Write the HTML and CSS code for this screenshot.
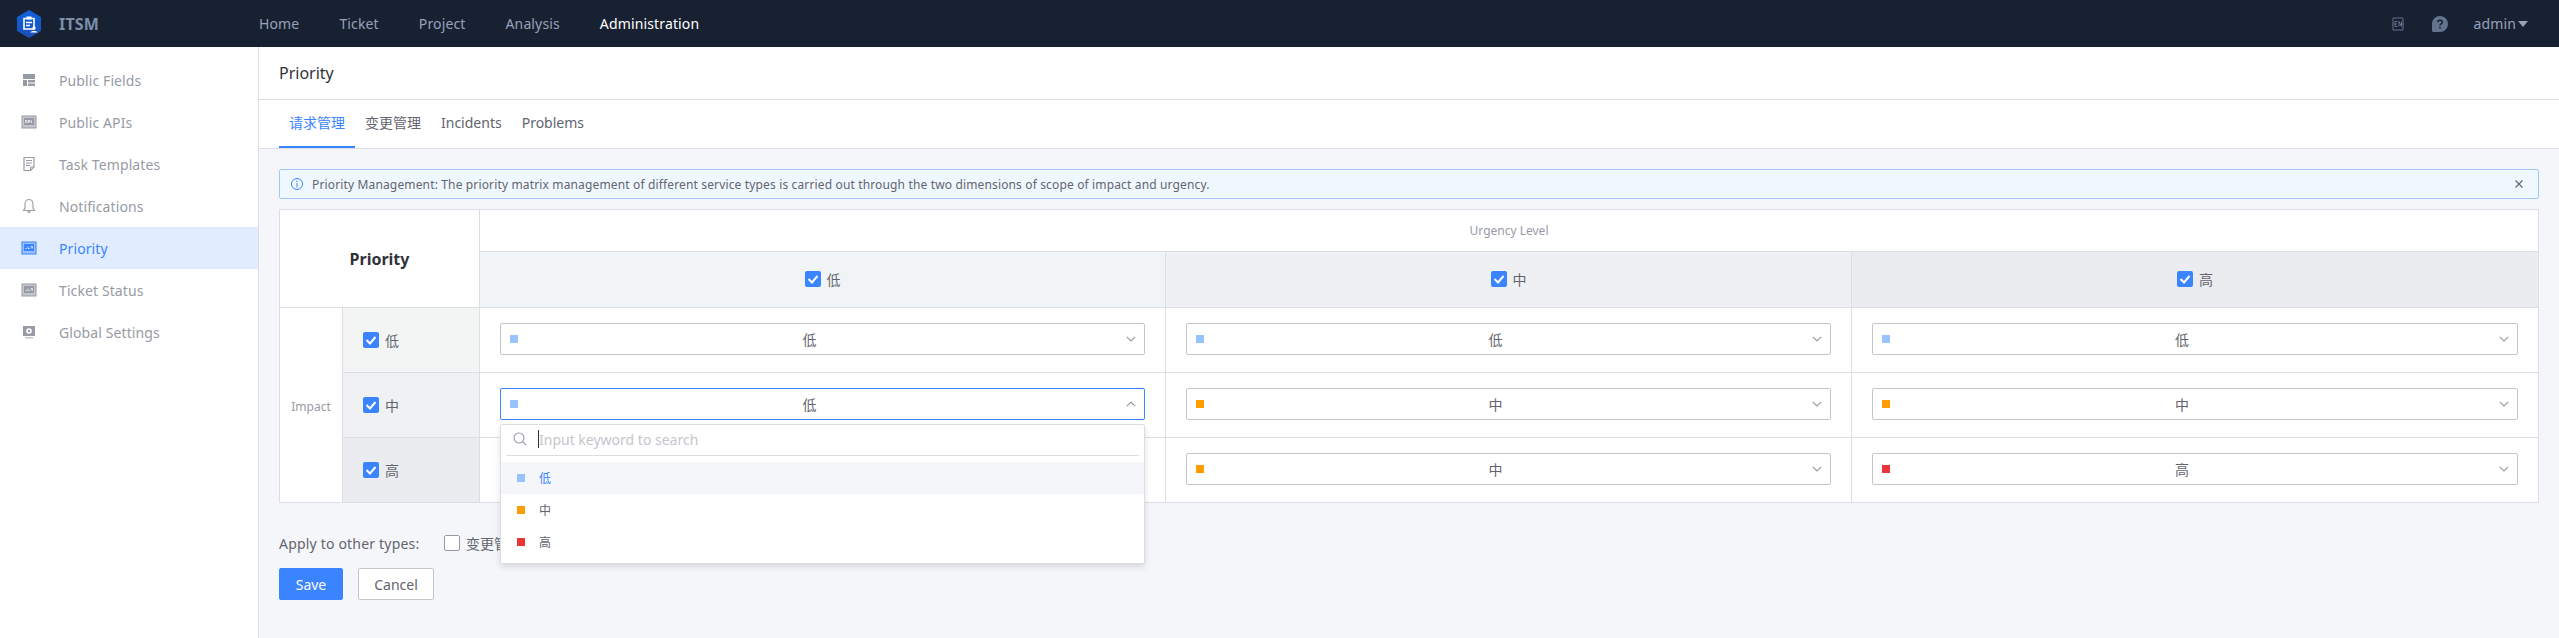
FILE: index.html
```html
<!DOCTYPE html>
<html lang="en">
<head>
<meta charset="utf-8">
<title>ITSM Priority</title>
<link rel="stylesheet" href="styles.css">
</head>
<body>
<header class="topbar">
  <div class="brand">
    <svg class="logo" viewBox="0 0 24 28" width="24" height="28"><defs><linearGradient id="lg" x1="0" y1="0" x2="0" y2="1"><stop offset="0" stop-color="#0f63dc"/><stop offset="1" stop-color="#1b4fb8"/></linearGradient></defs><path d="M12 0L24 7V21L12 28L0 21V7Z" fill="url(#lg)"/><path d="M7 8.5H17V19H7Z" fill="none" stroke="#fff" stroke-width="1.6"/><path d="M9.5 6.5H14.5V9.5H9.5Z" fill="#fff"/><path d="M9 12.5H15M9 15.5H13" stroke="#fff" stroke-width="1.4"/><circle cx="17" cy="18" r="1.7" fill="#fff"/><path d="M13.5 22.5C13.5 20.5 20.5 20.5 20.5 22.5Z" fill="#fff"/></svg>
    <span class="brand-name">ITSM</span>
  </div>
  <nav class="mainnav">
    <a class="nav-link">Home</a>
    <a class="nav-link">Ticket</a>
    <a class="nav-link">Project</a>
    <a class="nav-link">Analysis</a>
    <a class="nav-link nav-active">Administration</a>
  </nav>
  <div class="top-tools">
    <svg class="tool-en" viewBox="0 0 14 14" width="14" height="14"><path d="M2 3V1H12V3M2 11V13H12V11M1 7H2M12 7H13" fill="none" stroke="#63738c" stroke-width="1"/><path d="M2 3V11M12 3V11" stroke="#63738c" stroke-width="1"/><path d="M4 4.5H6.5M4 4.5V9.5H6.5M4 7H6M8 9.5V4.5L10.5 9.5V4.5" fill="none" stroke="#63738c" stroke-width="1"/></svg>
    <svg class="tool-help" viewBox="0 0 16 16" width="16" height="16"><path d="M8 0A8 8 0 0 1 8 16H1.5C.6 16 0 15.4 0 14.5V8A8 8 0 0 1 8 0Z" fill="#63738c"/><path d="M5.8 6.2C5.8 3.6 10.3 3.6 10.3 6.2C10.3 7.9 8 7.8 8 9.6" fill="none" stroke="#182132" stroke-width="1.5"/><rect x="7.2" y="10.8" width="1.6" height="1.7" fill="#182132"/></svg>
    <span class="user">admin</span>
    <span class="user-caret"></span>
  </div>
</header>
<div class="layout">
  <aside class="sidebar">
    <a class="side-item"><svg class="side-icon" viewBox="0 0 16 16" width="16" height="16"><path d="M2 2H14V7H2ZM2 8H6V14H2ZM7 8H14V10.5H7ZM7 11.5H14V14H7Z" fill="currentColor"/></svg><span>Public Fields</span></a>
    <a class="side-item"><svg class="side-icon" viewBox="0 0 16 16" width="16" height="16"><rect x="1" y="2" width="14" height="12" fill="#c4c6cc" stroke="currentColor"/><rect x="3" y="4" width="10" height="7" fill="currentColor"/><path d="M4.5 9V6.5H6V9M7.5 9V6.5H9V7.7H7.5M10.5 6.5V9" fill="none" stroke="#fff" stroke-width=".7"/></svg><span>Public APIs</span></a>
    <a class="side-item"><svg class="side-icon" viewBox="0 0 16 16" width="16" height="16"><path d="M3 1.500H13V11L9.500 14.500H3Z" fill="none" stroke="currentColor" stroke-width="1.200"/><path d="M5 4.500H11M5 7H11M5 9.500H9" stroke="currentColor"/><path d="M9.500 14V11H13" fill="none" stroke="currentColor"/></svg><span>Task Templates</span></a>
    <a class="side-item"><svg class="side-icon" viewBox="0 0 16 16" width="16" height="16"><path d="M8 1.500C5 1.500 4 4 4 6.500V10L2.500 12.500H13.500L12 10V6.500C12 4 11 1.500 8 1.500Z" fill="none" stroke="currentColor" stroke-width="1.100"/><path d="M6.500 14H9.500" stroke="currentColor" stroke-width="1.500"/></svg><span>Notifications</span></a>
    <a class="side-item side-active"><svg class="side-icon" viewBox="0 0 16 16" width="16" height="16"><rect x="1" y="2" width="14" height="12" fill="#9cc0ff" stroke="currentColor"/><rect x="3" y="4" width="10" height="7" fill="currentColor"/><path d="M4.500 8.500H6M7 6.500V8.500H8.500M10 8.500V6.500H11.500V8.500" fill="none" stroke="#fff" stroke-width=".7"/></svg><span>Priority</span></a>
    <a class="side-item"><svg class="side-icon" viewBox="0 0 16 16" width="16" height="16"><rect x="1" y="2" width="14" height="12" fill="#c4c6cc" stroke="currentColor"/><rect x="3" y="4" width="10" height="7" fill="currentColor"/><path d="M4.500 8.500H6M7 6.500V8.500H8.500M10 8.500V6.500H11.500V8.500" fill="none" stroke="#fff" stroke-width=".7"/></svg><span>Ticket Status</span></a>
    <a class="side-item"><svg class="side-icon" viewBox="0 0 16 16" width="16" height="16"><path d="M2 2H14V12H2Z" fill="currentColor"/><path d="M4 13H12V14.500H4Z" fill="#c4c6cc"/><circle cx="8" cy="7" r="2.800" fill="#fff"/><circle cx="8" cy="7" r="1.200" fill="currentColor"/></svg><span>Global Settings</span></a>
  </aside>
  <main class="main">
    <div class="page-title">Priority</div>
    <div class="tabs">
      <a class="tab tab-active">请求管理</a>
      <a class="tab">变更管理</a>
      <a class="tab">Incidents</a>
      <a class="tab">Problems</a>
    </div>
    <div class="content">
      <div class="alert">
        <svg class="alert-icon" viewBox="0 0 14 14" width="14" height="14"><circle cx="7" cy="7" r="5.500" fill="none" stroke="#3a84ff"/><path d="M7 6V10.500M7 3.500V5" stroke="#3a84ff"/></svg>
        <span class="alert-text">Priority Management: The priority matrix management of different service types is carried out through the two dimensions of scope of impact and urgency.</span>
        <svg class="alert-close" viewBox="0 0 10 10" width="10" height="10"><path d="M1.500 1.500L8.500 8.500M8.500 1.500L1.500 8.500" stroke="#63656e" stroke-width="1.100"/></svg>
      </div>
      <table class="matrix">
        <colgroup><col class="col-axis"><col class="col-label"><col class="col-val"><col class="col-val"><col></colgroup>
        <tr class="row-title">
          <th class="corner" colspan="2" rowspan="2">Priority</th>
          <td class="urgency" colspan="3">Urgency Level</td>
        </tr>
        <tr class="row-head">
          <td class="head-cell tone-1"><label class="check-label"><span class="check"><svg viewBox="0 0 16 16" width="16" height="16"><path d="M3.500 8L7 11.500L12.500 5" fill="none" stroke="#fff" stroke-width="2"/></svg></span>低</label></td>
          <td class="head-cell tone-2"><label class="check-label"><span class="check"><svg viewBox="0 0 16 16" width="16" height="16"><path d="M3.500 8L7 11.500L12.500 5" fill="none" stroke="#fff" stroke-width="2"/></svg></span>中</label></td>
          <td class="head-cell tone-3"><label class="check-label"><span class="check"><svg viewBox="0 0 16 16" width="16" height="16"><path d="M3.500 8L7 11.500L12.500 5" fill="none" stroke="#fff" stroke-width="2"/></svg></span>高</label></td>
        </tr>
        <tr class="row-body">
          <td class="axis" rowspan="3">Impact</td>
          <td class="label-cell row-tone-1"><label class="check-label"><span class="check"><svg viewBox="0 0 16 16" width="16" height="16"><path d="M3.500 8L7 11.500L12.500 5" fill="none" stroke="#fff" stroke-width="2"/></svg></span>低</label></td>
          <td class="sel-cell"><div class="select"><span class="mark mark-low"></span><span class="sel-text">低</span><svg class="chev" viewBox="0 0 10 6" width="10" height="6"><path d="M.8 .8L5 5L9.200 .8" fill="none" stroke="#979ba5" stroke-width="1.200"/></svg></div></td>
          <td class="sel-cell"><div class="select"><span class="mark mark-low"></span><span class="sel-text">低</span><svg class="chev" viewBox="0 0 10 6" width="10" height="6"><path d="M.8 .8L5 5L9.200 .8" fill="none" stroke="#979ba5" stroke-width="1.200"/></svg></div></td>
          <td class="sel-cell"><div class="select"><span class="mark mark-low"></span><span class="sel-text">低</span><svg class="chev" viewBox="0 0 10 6" width="10" height="6"><path d="M.8 .8L5 5L9.200 .8" fill="none" stroke="#979ba5" stroke-width="1.200"/></svg></div></td>
        </tr>
        <tr class="row-body">
          <td class="label-cell row-tone-2"><label class="check-label"><span class="check"><svg viewBox="0 0 16 16" width="16" height="16"><path d="M3.500 8L7 11.500L12.500 5" fill="none" stroke="#fff" stroke-width="2"/></svg></span>中</label></td>
          <td class="sel-cell">
            <div class="select-wrap">
              <div class="select select-open"><span class="mark mark-low"></span><span class="sel-text">低</span><svg class="chev" viewBox="0 0 10 6" width="10" height="6"><path d="M.8 5.200L5 1L9.200 5.200" fill="none" stroke="#979ba5" stroke-width="1.200"/></svg></div>
              <div class="dropdown">
                <div class="search">
                  <svg class="search-icon" viewBox="0 0 14 14" width="14" height="14"><circle cx="6" cy="6" r="5" fill="none" stroke="#979ba5" stroke-width="1.100"/><path d="M9.700 9.700L13 13" stroke="#979ba5" stroke-width="1.100"/></svg>
                  <span class="caret"></span>
                  <span class="placeholder">Input keyword to search</span>
                </div>
                <ul class="options">
                  <li class="option option-active"><span class="mark mark-low"></span>低</li>
                  <li class="option"><span class="mark mark-mid"></span>中</li>
                  <li class="option"><span class="mark mark-high"></span>高</li>
                </ul>
              </div>
            </div>
          </td>
          <td class="sel-cell"><div class="select"><span class="mark mark-mid"></span><span class="sel-text">中</span><svg class="chev" viewBox="0 0 10 6" width="10" height="6"><path d="M.8 .8L5 5L9.200 .8" fill="none" stroke="#979ba5" stroke-width="1.200"/></svg></div></td>
          <td class="sel-cell"><div class="select"><span class="mark mark-mid"></span><span class="sel-text">中</span><svg class="chev" viewBox="0 0 10 6" width="10" height="6"><path d="M.8 .8L5 5L9.200 .8" fill="none" stroke="#979ba5" stroke-width="1.200"/></svg></div></td>
        </tr>
        <tr class="row-body">
          <td class="label-cell row-tone-3"><label class="check-label"><span class="check"><svg viewBox="0 0 16 16" width="16" height="16"><path d="M3.500 8L7 11.500L12.500 5" fill="none" stroke="#fff" stroke-width="2"/></svg></span>高</label></td>
          <td class="sel-cell"></td>
          <td class="sel-cell"><div class="select"><span class="mark mark-mid"></span><span class="sel-text">中</span><svg class="chev" viewBox="0 0 10 6" width="10" height="6"><path d="M.8 .8L5 5L9.200 .8" fill="none" stroke="#979ba5" stroke-width="1.200"/></svg></div></td>
          <td class="sel-cell"><div class="select"><span class="mark mark-high"></span><span class="sel-text">高</span><svg class="chev" viewBox="0 0 10 6" width="10" height="6"><path d="M.8 .8L5 5L9.200 .8" fill="none" stroke="#979ba5" stroke-width="1.200"/></svg></div></td>
        </tr>
      </table>
      <div class="apply">
        <span class="apply-label">Apply to other types:</span>
        <label class="check-label"><span class="check check-off"></span>变更管理</label>
      </div>
      <div class="actions">
        <button class="btn btn-primary">Save</button>
        <button class="btn">Cancel</button>
      </div>
    </div>
  </main>
</div>
</body>
</html>
```
FILE: styles.css
```css
* { box-sizing: border-box; }
html, body { margin: 0; height: 100%; overflow: hidden; }
body {
  font-family: "Noto Sans", "Noto Sans CJK SC", sans-serif;
  font-size: 14px;
  color: #63656e;
  background: #f5f6fa;
  display: flex;
  flex-direction: column;
}
.topbar {
  height: 47px;
  flex: none;
  background: #182132;
  display: flex;
  align-items: center;
  padding-left: 17px;
}
.brand { width: 242px; display: flex; align-items: center; gap: 18px; }
.logo { display: block; }
.brand-name { font-size: 16px; font-weight: 700; color: #7c8ea8; letter-spacing: .2px; }
.mainnav { display: flex; gap: 40px; letter-spacing: .14px; }
.nav-link { color: #96a2b9; }
.nav-active { color: #fff; }
.top-tools { margin-left: auto; display: flex; align-items: center; padding-right: 31px; }
.tool-en { margin-right: 27px; }
.tool-help { margin-right: 25px; }
.user { color: #96a2b9; letter-spacing: .14px; }
.user-caret {
  margin-left: 2px;
  width: 0; height: 0;
  border-left: 5.5px solid transparent;
  border-right: 5.5px solid transparent;
  border-top: 6px solid #96a2b9;
}
.layout { flex: 1; display: flex; min-height: 0; }
.sidebar {
  width: 259px;
  flex: none;
  background: #fff;
  border-right: 1px solid #dcdee5;
  padding-top: 12px;
}
.side-item {
  height: 42px;
  display: flex;
  align-items: center;
  padding-left: 21px;
  gap: 22px;
  color: #979ba5;
  letter-spacing: .1px;
}
.side-icon { flex: none; color: #979ba5; }
.side-active { background: #e1ecff; color: #3a84ff; }
.side-active .side-icon { color: #3a84ff; }
.main { flex: 1; min-width: 0; display: flex; flex-direction: column; }
.page-title {
  height: 53px;
  flex: none;
  background: #fff;
  border-bottom: 1px solid #dcdee5;
  padding-left: 20px;
  font-size: 16px;
  line-height: 52px;
  color: #313238;
}
.tabs {
  height: 49px;
  flex: none;
  background: #fff;
  border-bottom: 1px solid #dcdee5;
  display: flex;
  padding-left: 20px;
}
.tab { padding: 0 10px; line-height: 46px; height: 48px; }
.tab-active { color: #3a84ff; border-bottom: 2px solid #3a84ff; }
.content { padding: 20px; flex: 1; }
.alert {
  height: 30px;
  background: #f0f8ff;
  border: 1px solid #a3c5fd;
  border-radius: 2px;
  display: flex;
  align-items: center;
  padding: 0 14px 0 10px;
  font-size: 12px;
}
.alert-icon { flex: none; margin-right: 8px; }
.alert-text { flex: 1; letter-spacing: .147px; }
.alert-close { flex: none; }
.matrix {
  margin-top: 10px;
  width: 100%;
  table-layout: fixed;
  border-collapse: collapse;
  background: #fff;
}
.matrix th, .matrix td { border: 1px solid #dcdee5; padding: 0; }
.col-axis { width: 63px; }
.col-label { width: 137px; }
.col-val { width: 686px; }
.row-title { height: 42px; }
.row-head { height: 56px; }
.row-body { height: 65px; }
.corner { font-size: 16px; font-weight: 700; color: #313238; }
.urgency { text-align: center; font-size: 12px; color: #979ba5; }
.head-cell { text-align: center; }
.tone-1 { background: #f1f4f7; }
.tone-2 { background: #eff0f3; }
.tone-3 { background: #ebecf0; }
.row-tone-1 { background: #f3f5f5; }
.row-tone-2 { background: #f0f1f3; }
.row-tone-3 { background: #ebecf0; }
.axis { text-align: center; font-size: 12px; color: #979ba5; padding-top: 2px !important; }
.label-cell { padding: 2px 0 0 20px !important; }
.check-label { display: inline-flex; align-items: center; gap: 6px; }
.check {
  width: 16px; height: 16px;
  background: #3a84ff;
  border-radius: 2px;
  display: block;
  flex: none;
}
.check svg { display: block; }
.check-off { background: #fff; border: 1px solid #979ba5; }
.sel-cell { padding: 0 20px 2px !important; }
.select-wrap { position: relative; }
.select {
  height: 32px;
  background: #fff;
  border: 1px solid #c4c6cc;
  border-radius: 2px;
  display: grid;
  grid-template-columns: 1fr 26px;
  align-items: center;
}
.select-open { border-color: #3a84ff; }
.select .mark { grid-area: 1 / 1; margin-left: 9px; }
.sel-text { grid-area: 1 / 1; text-align: center; }
.chev { grid-area: 1 / 2; justify-self: center; }
.mark { display: block; width: 8px; height: 8px; flex: none; }
.mark-low { background: #99c3ff; }
.mark-mid { background: #ff9c01; }
.mark-high { background: #ea3636; }
.dropdown {
  position: absolute;
  top: 36px;
  left: 0;
  right: 0;
  z-index: 5;
  height: 140px;
  background: #fff;
  border: 1px solid #dcdee5;
  border-radius: 2px;
  box-shadow: 0 3px 6px rgba(0, 0, 0, .12);
}
.search {
  height: 31px;
  margin: 0 5px;
  border-bottom: 1px solid #dcdee5;
  display: flex;
  align-items: center;
  padding: 0 0 2px 7px;
}
.search-icon { flex: none; margin-right: 11px; }
.caret { width: 1px; height: 18px; background: #313238; flex: none; }
.placeholder { color: #c4c6cc; }
.options { list-style: none; margin: 6px 0 0; padding: 0; }
.option {
  height: 32px;
  display: flex;
  align-items: center;
  padding-left: 16px;
  gap: 14px;
  font-size: 12px;
}
.option-active { background: #f5f6fa; color: #3a84ff; }
.apply { margin-top: 29px; display: flex; align-items: center; height: 22px; }
.apply-label { width: 165px; letter-spacing: .19px; }
.actions { margin-top: 14px; display: flex; gap: 15px; }
.btn {
  height: 32px;
  min-width: 76px;
  padding: 0 14px;
  background: #fff;
  border: 1px solid #c4c6cc;
  border-radius: 2px;
  color: #63656e;
  font: inherit;
}
.btn-primary { min-width: 64px; background: #3a84ff; border-color: #3a84ff; color: #fff; }
```
